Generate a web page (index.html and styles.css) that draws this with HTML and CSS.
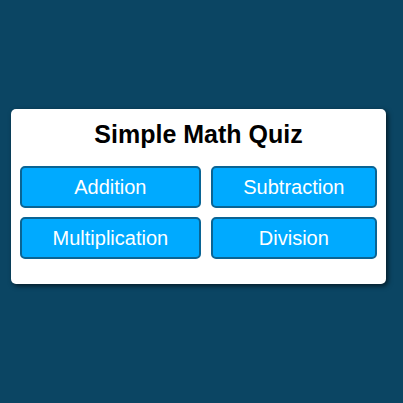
FILE: index.html
```html
<!DOCTYPE html>
<html>
<head>
<meta charset="utf-8">
<link rel="stylesheet" href="styles.css">
</head>
<body>
<div class="card">
  <h1 class="title">Simple Math Quiz</h1>
  <div class="ops">
    <button class="op">Addition</button>
    <button class="op">Subtraction</button>
    <button class="op">Multiplication</button>
    <button class="op">Division</button>
  </div>
</div>
</body>
</html>
```
FILE: styles.css
```css
html, body {
  margin: 0;
  padding: 0;
}
body {
  width: 403px;
  height: 403px;
  background: #0b4563;
  font-family: "Liberation Sans", Arial, sans-serif;
  padding-top: 109px;
  box-sizing: border-box;
}
.card {
  margin-left: 11px;
  width: 375px;
  box-sizing: border-box;
  background: #ffffff;
  border-radius: 5px;
  padding: 11px 9px 25px 9px;
  box-shadow: 2px 2px 5px rgba(0, 0, 0, 0.6);
}
.title {
  margin: 0 0 17px 0;
  font-size: 25px;
  line-height: 29px;
  font-weight: bold;
  text-align: center;
  color: #000;
}
.ops {
  display: grid;
  grid-template-columns: auto auto;
  gap: 9px 10px;
}
.op {
  font-family: "Liberation Sans", Arial, sans-serif;
  font-size: 20px;
  line-height: 23px;
  color: #ffffff;
  background: #00aaff;
  border: 2px solid #0a6494;
  border-radius: 5px;
  padding: 7.5px 10px;
  text-align: center;
}
```
